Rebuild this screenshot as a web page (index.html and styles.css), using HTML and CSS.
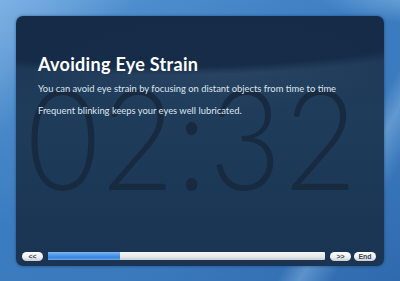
FILE: index.html
```html
<!DOCTYPE html>
<html lang="en">
<head>
    <meta charset="UTF-8">
    <title>Avoiding Eye Strain</title>
    <link rel="stylesheet" href="styles.css">
</head>
<body>
    <div class="panel">
        <div class="stage">
            <div class="clock">02:32</div>
            <div class="content">
                <h1>Avoiding Eye Strain</h1>
                <p>You can avoid eye strain by focusing on distant objects from time to time</p>
                <p>Frequent blinking keeps your eyes well lubricated.</p>
            </div>
        </div>
        <div class="controls">
            <button class="pill">&lt;&lt;</button>
            <div class="progress"><div class="fill" style="width: 26%;"></div></div>
            <button class="pill">&gt;&gt;</button>
            <button class="pill">End</button>
        </div>
    </div>
</body>
</html>
```

FILE: styles.css
```css
/* Reset */
body, h1, p {
    margin: 0;
    padding: 0;
}

body {
    width: 400px;
    height: 281px;
    overflow: hidden;
    font-family: "Lato", "DejaVu Sans", sans-serif;
    color: #e8eef5;
    background:
        radial-gradient(ellipse 150px 40px at 420px -5px, rgba(150, 200, 240, 0.6), rgba(150, 200, 240, 0) 70%),
        linear-gradient(120deg, rgba(170, 210, 245, 0) 0%, rgba(170, 210, 245, 0) 78%, rgba(170, 210, 245, 0.35) 82%, rgba(170, 210, 245, 0) 88%),
        linear-gradient(135deg, rgba(190, 220, 250, 0.35) 0%, rgba(190, 220, 250, 0.2) 10%, rgba(190, 220, 250, 0) 20%),
        linear-gradient(150deg, #5a9ad8 0%, #4d8ccc 18%, #3b7cc0 45%, #3a79bc 70%, #2f6aad 100%);
    padding: 16px 16px 15px;
    box-sizing: border-box;
}

/* Main translucent window */
.panel {
    height: 250px;
    border-radius: 7px;
    display: flex;
    flex-direction: column;
    background:
        radial-gradient(ellipse 330px 55px at 150px 4px, rgba(20, 42, 70, 0.9) 0%, rgba(20, 42, 70, 0.9) 85%, rgba(20, 42, 70, 0) 100%),
        radial-gradient(ellipse 260px 70px at 200px 45px, rgba(120, 150, 180, 0.14), rgba(120, 150, 180, 0) 75%),
        linear-gradient(180deg, #1c3653 0%, #1f3c5b 40%, #1c3857 70%, #1a3452 100%);
    box-shadow: 0 0 3px rgba(10, 30, 60, 0.5);
}

.stage {
    flex: 1;
    display: grid;
    overflow: hidden;
}

.clock,
.content {
    grid-area: 1 / 1;
}

.clock {
    margin-top: 50px;
    margin-left: 11px;
    font-family: "Lato", sans-serif;
    font-weight: 300;
    font-size: 124px;
    line-height: 1;
    letter-spacing: 3px;
    color: #182a40;
    transform: scaleY(1.13);
    transform-origin: 0 0;
}

.content {
    padding: 37px 22px 0;
    position: relative;
}

h1 {
    font-size: 18px;
    line-height: 22px;
    font-weight: 700;
    color: #fff;
    letter-spacing: 0.3px;
    margin-bottom: 8px;
}

.content p {
    font-size: 9.4px;
    line-height: 12px;
    color: #dde5ee;
    margin-bottom: 10px;
}

/* Bottom controls */
.controls {
    display: flex;
    align-items: center;
    gap: 5px;
    padding: 0 8px 5px 6px;
    height: 10px;
}

.pill {
    height: 9px;
    width: 21px;
    padding: 0;
    border: none;
    border-radius: 5px;
    background: linear-gradient(180deg, #ffffff 0%, #eceff2 60%, #c9ced4 100%);
    font-family: "Liberation Sans", sans-serif;
    font-size: 7px;
    font-weight: 700;
    line-height: 9px;
    color: #3c4250;
}

.pill:last-child {
    width: 22px;
    margin-left: -2px;
}

.progress {
    flex: 1;
    height: 8px;
    background: linear-gradient(180deg, #f4f5f6 0%, #e6e8ea 60%, #c8ccd0 100%);
    border-radius: 1px;
    overflow: hidden;
}

.fill {
    height: 100%;
    background: linear-gradient(180deg, #7fb6f2 0%, #4d95e6 45%, #3a84dc 70%, #6aa8ee 100%);
}
```
